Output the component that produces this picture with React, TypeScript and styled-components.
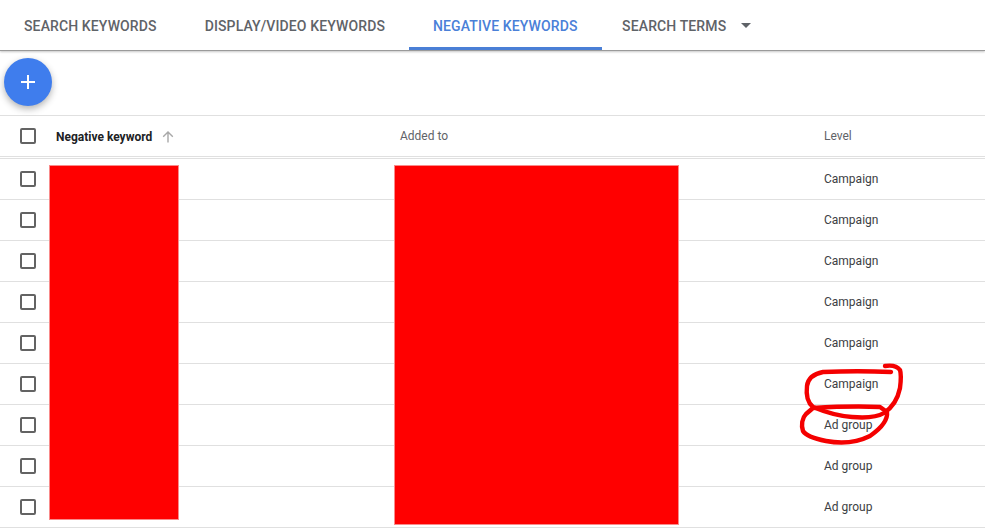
import React from "react";
import styled, { createGlobalStyle } from "styled-components";

const Global = createGlobalStyle`
  html, body { margin: 0; padding: 0; background: #fff; overflow: hidden; }
  body { font-family: Roboto, "Liberation Sans", sans-serif; }
`;

const Page = styled.div`
  position: relative;
  width: 985px;
  height: 530px;
  overflow: hidden;
  background: #fff;
`;

const TabBar = styled.div`
  display: flex;
  height: 51px;
  box-sizing: border-box;
  border-bottom: 1px solid #9a9a9a;
  box-shadow: 0 1px 2px rgba(0, 0, 0, 0.22);
  position: relative;
`;

const Tab = styled.div<{ $active?: boolean }>`
  display: flex;
  align-items: center;
  gap: 15px;
  padding: 4px 24px 0;
  box-sizing: border-box;
  height: 50px;
  font-size: 14px;
  font-weight: 500;
  letter-spacing: 0.12px;
  white-space: nowrap;
  color: ${(p) => (p.$active ? "#4a80d8" : "#5f6368")};
  border-bottom: 3px solid ${(p) => (p.$active ? "#4a7fd6" : "transparent")};
`;

const MoreTab = styled(Tab)`
  padding-left: 20.5px;
`;

const Caret = styled.span`
  width: 0;
  height: 0;
  border-left: 5px solid transparent;
  border-right: 5px solid transparent;
  border-top: 5px solid #5f6368;
`;

const Toolbar = styled.div`
  height: 65px;
  box-sizing: border-box;
  padding: 7px 4px 0;
  border-bottom: 1px solid #e0e0e0;
`;

const Fab = styled.button`
  display: flex;
  align-items: center;
  justify-content: center;
  width: 48px;
  height: 48px;
  border: 0;
  padding: 0;
  border-radius: 50%;
  background: #3f7ded;
  box-shadow: 0 3px 7px rgba(0, 0, 0, 0.3);
`;

const gridCols = "56px 344px 424px 1fr";

const HeaderRow = styled.div`
  display: grid;
  grid-template-columns: ${gridCols};
  align-items: center;
  height: 41px;
  box-sizing: border-box;
  border-bottom: 1px solid #e0e0e0;
  margin-bottom: 1px;
  font-size: 12px;
  color: #5f6368;
`;

const RowList = styled.div`
  border-top: 1px solid #e0e0e0;
`;

const Row = styled.div`
  display: grid;
  grid-template-columns: ${gridCols};
  align-items: center;
  height: 41px;
  box-sizing: border-box;
  border-bottom: 1px solid #e0e0e0;
  font-size: 12px;
  color: #3c4043;
`;

const CheckCell = styled.div`
  display: flex;
  justify-content: center;
`;

const Check = styled.span`
  display: block;
  width: 12px;
  height: 12px;
  border: 2px solid #636363;
  border-radius: 2px;
`;

const SortHead = styled.div`
  display: flex;
  align-items: center;
  gap: 10px;
  font-weight: 700;
  color: #202124;
  padding-top: 2px;
`;

const Redaction = styled.div<{ $left: number; $width: number; $height: number }>`
  position: absolute;
  top: 165px;
  left: ${(p) => p.$left}px;
  width: ${(p) => p.$width}px;
  height: ${(p) => p.$height}px;
  box-sizing: border-box;
  background: #ff0000;
  border: 1px solid #f98b8b;
`;

const Scribble = styled.svg`
  position: absolute;
  left: 0;
  top: 0;
  pointer-events: none;
`;

const levels = ["Campaign", "Campaign", "Campaign", "Campaign", "Campaign", "Campaign", "Ad group", "Ad group", "Ad group"];

export default function App() {
  return (
    <Page>
      <Global />
      <TabBar>
        <Tab>SEARCH KEYWORDS</Tab>
        <Tab>DISPLAY/VIDEO KEYWORDS</Tab>
        <Tab $active>NEGATIVE KEYWORDS</Tab>
        <MoreTab>
          SEARCH TERMS
          <Caret />
        </MoreTab>
      </TabBar>
      <Toolbar>
        <Fab aria-label="Add">
          <svg width="16" height="16" viewBox="0 0 16 16">
            <path d="M8 1v14M1 8h14" stroke="#fff" strokeWidth="2" fill="none" />
          </svg>
        </Fab>
      </Toolbar>
      <HeaderRow>
        <CheckCell>
          <Check />
        </CheckCell>
        <SortHead>
          Negative keyword
          <svg width="12" height="12" viewBox="0 0 12 12">
            <path d="M6 11.5V1M1.2 5.8L6 1l4.8 4.8" stroke="#a8a8a8" strokeWidth="1.4" fill="none" />
          </svg>
        </SortHead>
        <div>Added to</div>
        <div>Level</div>
      </HeaderRow>
      <RowList>
        {levels.map((level, i) => (
          <Row key={i}>
            <CheckCell>
              <Check />
            </CheckCell>
            <div />
            <div />
            <div>{level}</div>
          </Row>
        ))}
      </RowList>
      <Redaction $left={49} $width={130} $height={355} />
      <Redaction $left={394} $width={285} $height={360} />
      <Scribble width="985" height="530" viewBox="0 0 985 530">
        <path
          d="M891 372 C870 371 845 371 823 372 C813 374 808 378 807 386 C806 394 807 402 813 407 C825 412 838 416 852 417 C864 418 876 418 884 413 C893 407 898 398 900 388 C901 380 901 373 900 370 C897 366 891 365 885 366"
          fill="none"
          stroke="#f40000"
          strokeWidth="4.4"
          strokeLinecap="round"
          strokeLinejoin="round"
        />
        <path
          d="M813 408 C830 407 860 406 880 407 L887 412 C888 420 880 429 870 436 C858 442 842 444 826 441 C816 439 806 436 803 431 C801 425 802 418 806 414 L813 408"
          fill="none"
          stroke="#f40000"
          strokeWidth="4.4"
          strokeLinecap="round"
          strokeLinejoin="round"
        />
      </Scribble>
    </Page>
  );
}
